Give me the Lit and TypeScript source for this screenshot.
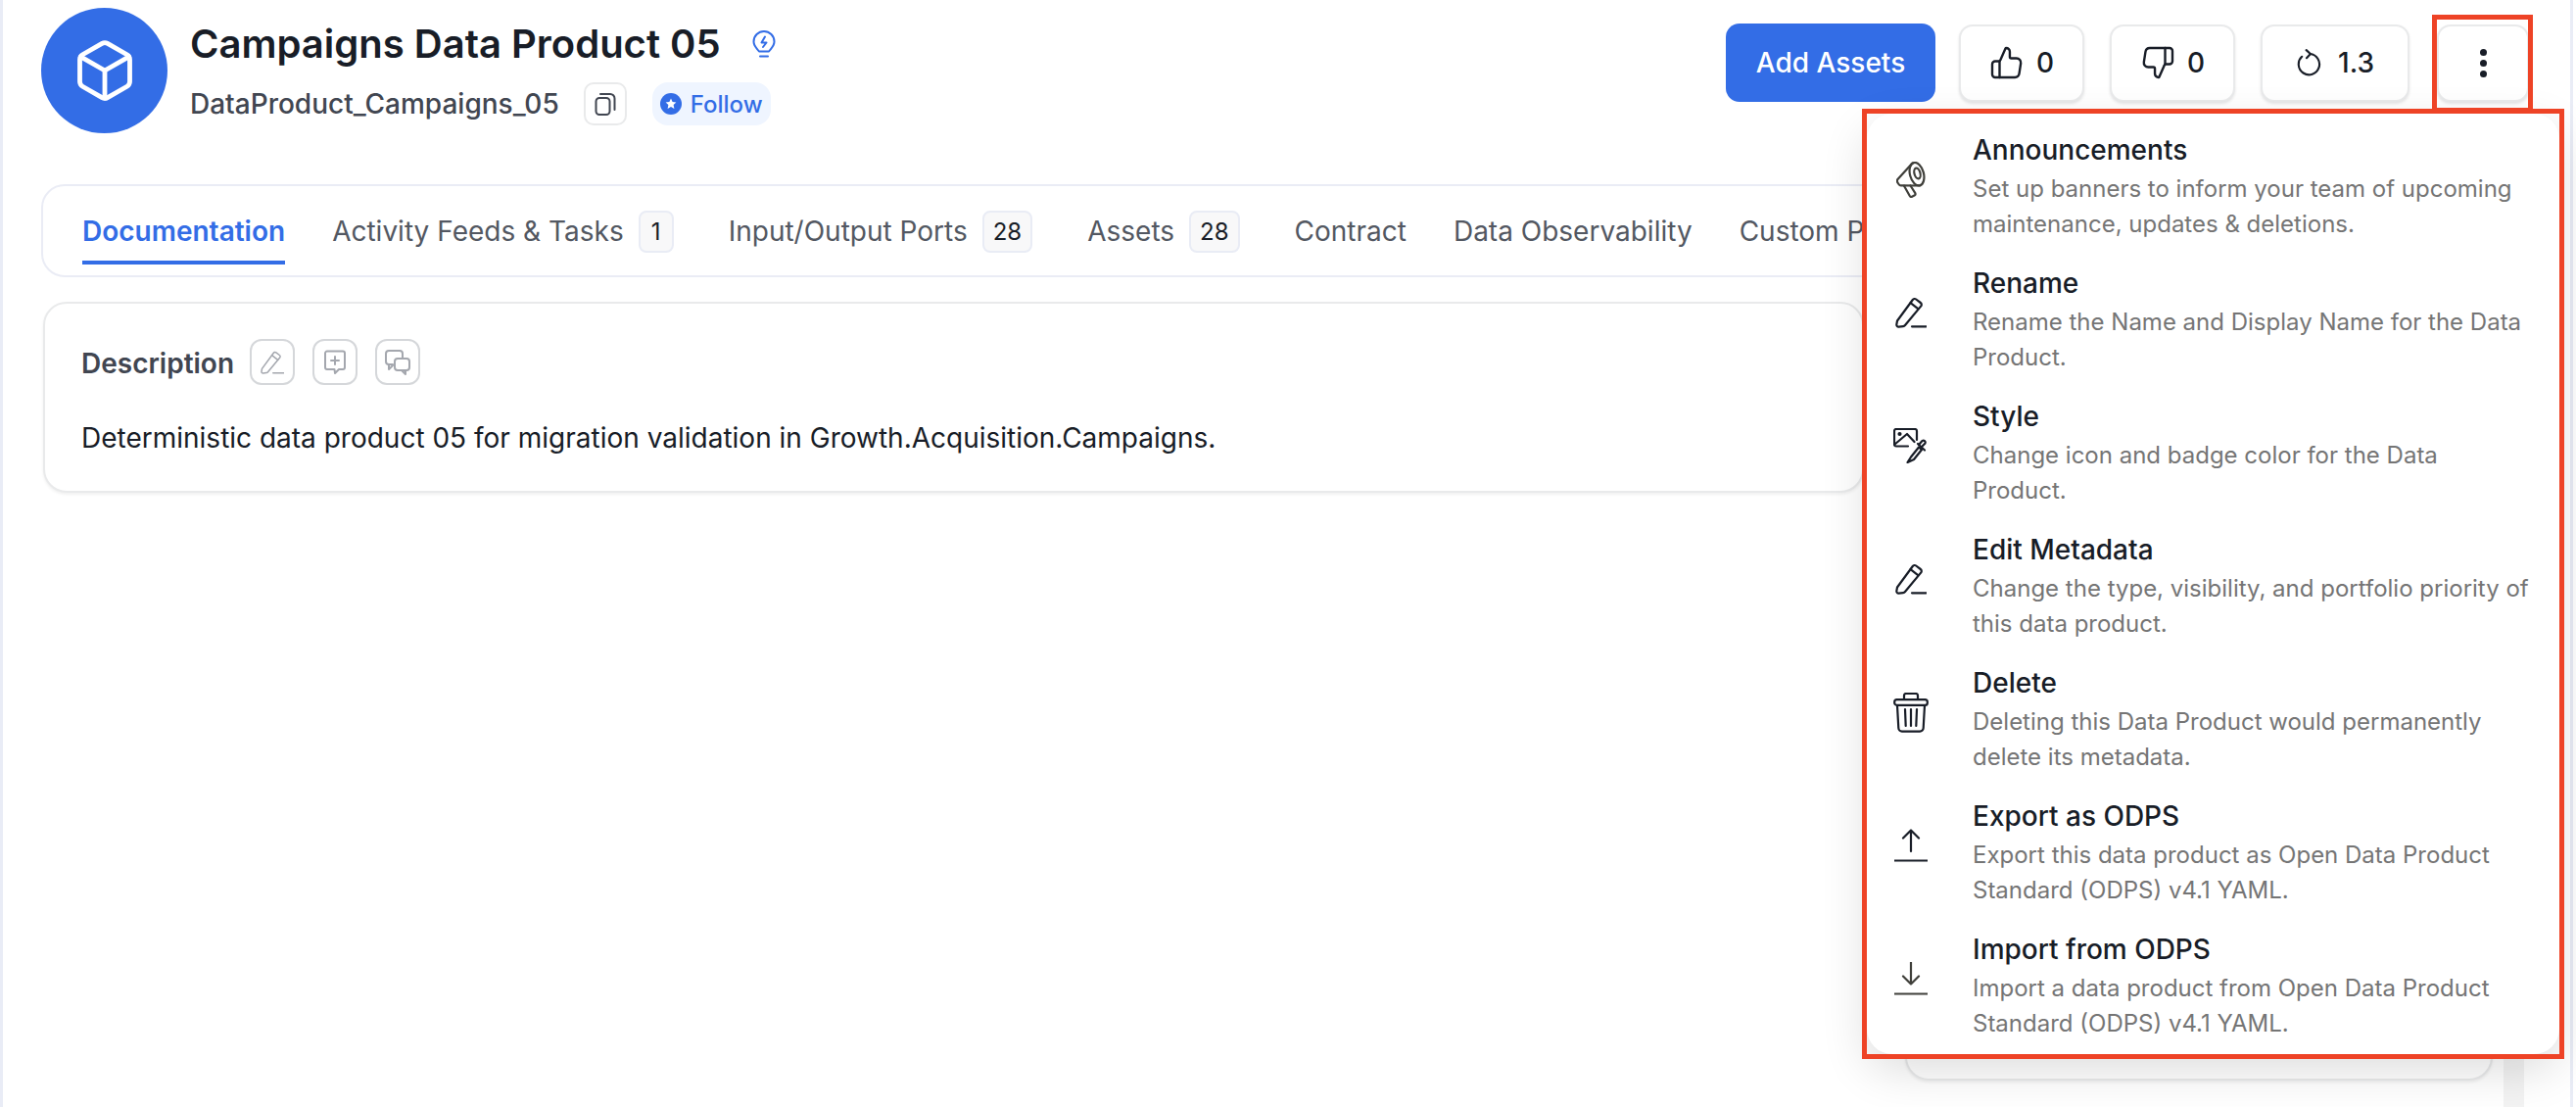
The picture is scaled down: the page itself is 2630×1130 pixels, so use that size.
import { LitElement, html, css, svg } from "lit";
import { customElement } from "lit/decorators.js";

const pencil = svg`<path d="M2 24.5 17.8 3a2.4 2.4 0 0 1 3.4-.5l4.6 3.5a2.4 2.4 0 0 1 .5 3.4L10 29a3 3 0 0 1-2 1.1l-4.5.5a2 2 0 0 1-2.2-2.2z"/><path d="M15.5 6.2 23.500 12.4"/><path d="M17 30.3H31.5"/>`;

const items = [
  { t: "Announcements", d: "Set up banners to inform your team of upcoming maintenance, updates & deletions.", vb: "0 0 30 37", w: 30, h: 37, cls: "brown",
    i: svg`<ellipse cx="21" cy="12.700" rx="7" ry="12" transform="rotate(-15 21 12.700)"/><ellipse cx="21.500" cy="12" rx="3" ry="5.500" transform="rotate(-15 21.500 12)"/><path d="M16.500 1.500 1.500 18a3 3 0 0 0 0 3.500l1 1.500a3 3 0 0 0 3 1.300L24.500 24.500"/><path d="M8 24.700 13.800 35a2 2 0 0 0 2.700.6l2-1a2 2 0 0 0 .7-2.700L14.500 24.500"/>` },
  { t: "Rename", d: "Rename the Name and Display Name for the Data Product.", vb: "0 0 32 32", w: 32, h: 32, cls: "", i: pencil },
  { t: "Style", d: "Change icon and badge color for the Data Product.", vb: "0 0 36 36", w: 36, h: 36, cls: "",
    i: svg`<path d="M15 18.500H3a2 2 0 0 1-2-2V3a2 2 0 0 1 2-2h19a2 2 0 0 1 2 2v9"/><circle cx="6.500" cy="6" r="1" class="fill"/><path d="M1.500 16.500 14 6l7.500 8"/><path d="M14.500 35 18 29.500 26 19.500 29 22 21 32z"/><path d="M25 16 32 22.500"/><path d="M28.500 19.500 32.500 15.500a2 2 0 0 0-3-2.500l-3.500 4"/>` },
  { t: "Edit Metadata", d: "Change the type, visibility, and portfolio priority of this data product.", vb: "0 0 32 32", w: 32, h: 32, cls: "", i: pencil },
  { t: "Delete", d: "Deleting this Data Product would permanently delete its metadata.", vb: "0 0 36 41", w: 36, h: 41, cls: "",
    i: svg`<rect x="1.200" y="7.200" width="33.600" height="5.600" rx="2.400"/><path d="M11 7V3a2 2 0 0 1 2-2h10a2 2 0 0 1 2 2v4"/><path d="M4 13l1.300 23a3.600 3.600 0 0 0 3.600 3.600h18.200a3.600 3.600 0 0 0 3.600-3.600L32 13"/><path d="M12 17l.7 17M18 17v17M24 17l-.7 17"/>` },
  { t: "Export as ODPS", d: "Export this data product as Open Data Product Standard (ODPS) v4.1 YAML.", vb: "0 0 34 34", w: 34, h: 34, cls: "",
    i: svg`<path d="M17 23V1.500M9 9.500l8-8 8 8"/><path d="M.5 32.500h33"/>` },
  { t: "Import from ODPS", d: "Import a data product from Open Data Product Standard (ODPS) v4.1 YAML.", vb: "0 0 34 34", w: 34, h: 34, cls: "brown",
    i: svg`<path d="M17 .5V22.500M9 14.500l8 8 8-8"/><path d="M.5 32.500h33"/>` },
];

const tabs: { label: string; count?: string; active?: boolean }[] = [
  { label: "Documentation", active: true },
  { label: "Activity Feeds & Tasks", count: "1" },
  { label: "Input/Output Ports", count: "28" },
  { label: "Assets", count: "28" },
  { label: "Contract" },
  { label: "Data Observability" },
  { label: "Custom Properties" },
];

@customElement("app-root")
export class AppRoot extends LitElement {
  static styles = css`
    :host {
      display: block;
      width: 2630px;
      height: 1130px;
      position: relative;
      overflow: hidden;
      background: #fff;
      font-family: Inter, "Liberation Sans", sans-serif;
      color: #181d27;
    }
    * { box-sizing: border-box; }
    svg { display: block; fill: none; stroke: currentColor; stroke-linecap: round; stroke-linejoin: round; flex: none; }
    .edge-l { position: absolute; left: 0; top: 0; bottom: 0; width: 3px; background: #e9ecf6; }
    .edge-r { position: absolute; left: 2624px; top: 0; bottom: 0; width: 3px; background: #e9ecf6; }
    .scroll { position: absolute; left: 2556px; top: 300px; bottom: 0; width: 21px; background: #f3f3f3; }

    .page { padding: 8px 48px 0 42px; }
    .head { display: flex; align-items: flex-start; height: 128px; }
    .avatar { width: 129px; height: 128px; border-radius: 50%; background: #336de6; color: #fff; display: flex; align-items: center; justify-content: center; margin-right: 23px; }
    .ident { display: flex; flex-direction: column; }
    .title-row { display: flex; align-items: center; height: 58px; margin-top: 8px; }
    h1 { margin: 0; font-size: 40px; line-height: 58px; font-weight: 600; color: #181d27; white-space: nowrap; }
    .bulb { color: #336de6; margin-left: 32px; }
    .sub-row { display: flex; align-items: center; height: 44px; margin-top: 10px; }
    .sub { font-size: 28px; font-weight: 500; color: #414651; white-space: nowrap; }
    .copy { width: 44px; height: 44px; margin-left: 25px; border: 2px solid #e9eaeb; border-radius: 10px; display: flex; align-items: center; justify-content: center; color: #414651; }
    .follow { height: 44px; margin-left: 26px; padding: 0 8px; border-radius: 16px; background: #eff5ff; color: #336de6; display: flex; align-items: center; gap: 9px; font-size: 24px; font-weight: 500; }
    .follow-dot { width: 22px; height: 22px; border-radius: 50%; background: #336de6; display: flex; align-items: center; justify-content: center; }

    .actions { margin-left: auto; display: flex; align-items: center; margin-top: 16px; }
    .primary { height: 80px; width: 214px; border-radius: 14px; background: #336de6; color: #fff; font-size: 28px; font-weight: 500; display: flex; align-items: center; justify-content: center; margin-right: 24px; }
    .btn { height: 79px; border: 2px solid #e9eaeb; border-radius: 14px; background: #fff; box-shadow: 0 2px 3px rgba(10, 13, 18, 0.1); display: flex; align-items: center; justify-content: center; gap: 12px; font-size: 28px; font-weight: 500; color: #181d27; }
    .btn.thumb { width: 128px; margin-right: 26px; }
    .btn.ver { width: 152px; margin-right: 28px; gap: 15px; }
    .btn.more { width: 94px; flex-direction: column; gap: 4px; }
    .dot { width: 7px; height: 7px; border-radius: 50%; background: #181d27; }

    .tabs { margin-top: 52px; width: 2503px; height: 95px; border: 2px solid #eaecf5; border-radius: 24px; background: #fff; padding: 25px 0 0 40px; display: flex; gap: 48px; overflow: hidden; }
    .tab { position: relative; height: 55px; display: flex; align-items: flex-start; gap: 15px; font-size: 28px; color: #535862; white-space: nowrap; }
    .tab.has-count { margin-right: 8px; }
    .tab span.lbl { height: 43px; line-height: 43px; }
    .tab.active { color: #336de6; font-weight: 600; }
    .tab.active::after { content: ""; position: absolute; left: 0; right: 0; bottom: 0; height: 4px; background: #336de6; }
    .count { height: 43px; min-width: 36px; padding: 0 9px; border: 2px solid #e9ecf5; border-radius: 8px; background: #f8f8f9; font-size: 24px; line-height: 39px; text-align: center; color: #181d27; }

    .body { display: grid; grid-template-columns: 1859px 600px; gap: 42px; margin: 25px 0 0 2px; }
    .card { border: 2px solid #e9eaeb; border-radius: 24px; background: #fff; box-shadow: 0 2px 3px rgba(10, 13, 18, 0.06); }
    .desc { height: 195px; padding: 36px 38px 0 37px; }
    .desc-head { display: flex; align-items: center; height: 47px; }
    .desc-title { font-size: 28px; font-weight: 600; color: #414651; margin-right: 16px; padding-top: 2px; }
    .mini { width: 46px; height: 47px; border: 2px solid #d5d7da; border-radius: 12px; display: flex; align-items: center; justify-content: center; color: #a4a7ae; margin-right: 18px; }
    .desc p { margin: 34px 0 0; font-size: 28px; line-height: 40px; color: #181d27; white-space: nowrap; }
    .side { height: 795px; }

    .menu { position: absolute; left: 1906px; top: 116px; width: 707px; height: 960px; background: #fff; border-radius: 26px; box-shadow: 0 16px 48px rgba(0, 0, 0, 0.14); padding: 19px 0 0 26px; display: flex; flex-direction: column; }
    .item { height: 136px; flex: none; display: flex; align-items: flex-start; }
    .ico { width: 82px; height: 112px; display: flex; align-items: center; color: #181d27; padding-bottom: 16px; flex: none; }
    .ico svg { stroke-width: 2.2; }
    .ico .inner { width: 38px; display: flex; justify-content: center; }
    .ico.brown { color: #3f3f3a; }
    .ico .fill { fill: currentColor; }
    .itxt { width: 572px; }
    .it { font-size: 28px; line-height: 36px; font-weight: 500; color: #181d27; }
    .id { margin-top: 4px; font-size: 24px; line-height: 36px; color: #757575; }

    .red { position: absolute; border: 5px solid #ee4326; pointer-events: none; }
    .red.a { left: 2483px; top: 15px; width: 103px; height: 100px; }
    .red.b { left: 1901px; top: 111px; width: 717px; height: 970px; }
  `;

  render() {
    return html`
      <div class="edge-l"></div>
      <div class="edge-r"></div>
      <div class="page">
        <div class="head">
          <div class="avatar">
            <svg width="68" height="68" viewBox="0 0 24 24" stroke-width="1.7"><path d="M21 16V8a2 2 0 0 0-1-1.73l-7-4a2 2 0 0 0-2 0l-7 4A2 2 0 0 0 3 8v8a2 2 0 0 0 1 1.73l7 4a2 2 0 0 0 2 0l7-4A2 2 0 0 0 21 16z"/><path d="M3.3 7 12 12l8.7-5"/><path d="M12 22V12"/></svg>
          </div>
          <div class="ident">
            <div class="title-row">
              <h1>Campaigns Data Product 05</h1>
              <svg class="bulb" width="24" height="29" viewBox="0 0 24 29" stroke-width="2"><path d="M7 21.500C4.500 18 1.500 16 1.500 11.500a10.500 10.500 0 0 1 21 0c0 4.500-3 6.500-5.500 10z"/><path d="M8 26.500h8"/><path d="M13 6.500 9.500 12.500h5L11 17"/></svg>
            </div>
            <div class="sub-row">
              <span class="sub">DataProduct_Campaigns_05</span>
              <div class="copy">
                <svg width="22" height="24" viewBox="0 0 22 24" stroke-width="2"><rect x="1.500" y="6" width="14" height="17" rx="3.500"/><path d="M6 2h10a4.500 4.500 0 0 1 4.500 4.500V18"/></svg>
              </div>
              <div class="follow">
                <span class="follow-dot"><svg width="12" height="12" viewBox="0 0 12 12"><path d="M6 .6l1.600 3.500 3.800.4-2.800 2.600.8 3.800L6 9l-3.400 1.900.8-3.800L.6 4.500l3.800-.4z" fill="#fff" stroke="none"/></svg></span>
                Follow
              </div>
            </div>
          </div>
          <div class="actions">
            <div class="primary">Add Assets</div>
            <div class="btn thumb">
              <svg width="36" height="36" viewBox="0 0 24 24" stroke-width="1.6"><path d="M7 22V11"/><path d="M2 13v7a2 2 0 0 0 2 2h13.400a3 3 0 0 0 2.960-2.540l1.080-7A3 3 0 0 0 18.480 9h-3.520a1 1 0 0 1-1-1V4.460A2.460 2.460 0 0 0 11.500 2a.54.54 0 0 0-.5.32L7.480 10.300a1 1 0 0 1-.91.7H4a2 2 0 0 0-2 2z"/></svg>
              0
            </div>
            <div class="btn thumb">
              <svg width="36" height="36" viewBox="0 0 24 24" stroke-width="1.6"><path d="M17 2v11"/><path d="M22 11V4a2 2 0 0 0-2-2H6.600a3 3 0 0 0-2.960 2.540l-1.080 7A3 3 0 0 0 5.520 15h3.520a1 1 0 0 1 1 1v3.540A2.460 2.460 0 0 0 12.500 22a.54.54 0 0 0 .5-.32l3.520-7.980a1 1 0 0 1 .91-.7H20a2 2 0 0 0 2-2z"/></svg>
              0
            </div>
            <div class="btn ver">
              <svg width="28" height="28" viewBox="0 0 25 25" stroke-width="1.9"><path d="M13 4.500A9.500 9.500 0 1 1 5.500 7"/><path d="M9.500 1 13.300 4.500 9.800 8.200"/></svg>
              1.3
            </div>
            <div class="btn more"><span class="dot"></span><span class="dot"></span><span class="dot"></span></div>
          </div>
        </div>

        <div class="tabs">
          ${tabs.map(
            (t) => html`<div class="tab ${t.active ? "active" : ""} ${t.count ? "has-count" : ""}">
              <span class="lbl">${t.label}</span>${t.count ? html`<span class="count">${t.count}</span>` : ""}
            </div>`
          )}
        </div>

        <div class="body">
          <div class="card desc">
            <div class="desc-head">
              <span class="desc-title">Description</span>
              <span class="mini"><svg width="24" height="24" viewBox="0 0 32 32" stroke-width="2">${pencil}</svg></span>
              <span class="mini"><svg width="22" height="26" viewBox="0 0 22 26" stroke-width="2"><path d="M3 1.500h16a2 2 0 0 1 2 2V18a2 2 0 0 1-2 2h-4l-4 4-.5-4H3a2 2 0 0 1-2-2V3.500a2 2 0 0 1 2-2z"/><path d="M11 7v8M7 11h8"/></svg></span>
              <span class="mini"><svg width="26" height="26" viewBox="0 0 26 26" stroke-width="2"><path d="M8 15H4a3 3 0 0 1-3-3V4a3 3 0 0 1 3-3h11a3 3 0 0 1 3 3v4"/><path d="M4 15v5l4-4"/><rect x="10" y="9" width="15" height="12" rx="3"/><path d="M21 21v4l-4-4"/></svg></span>
            </div>
            <p>Deterministic data product 05 for migration validation in Growth.Acquisition.Campaigns.</p>
          </div>
          <div class="card side"></div>
        </div>
      </div>

      <div class="scroll"></div>

      <div class="menu">
        ${items.map(
          (m) => html`<div class="item">
            <div class="ico ${m.cls}"><div class="inner"><svg width=${m.w} height=${m.h} viewBox=${m.vb}>${m.i}</svg></div></div>
            <div class="itxt"><div class="it">${m.t}</div><div class="id">${m.d}</div></div>
          </div>`
        )}
      </div>

      <div class="red a"></div>
      <div class="red b"></div>
    `;
  }
}
